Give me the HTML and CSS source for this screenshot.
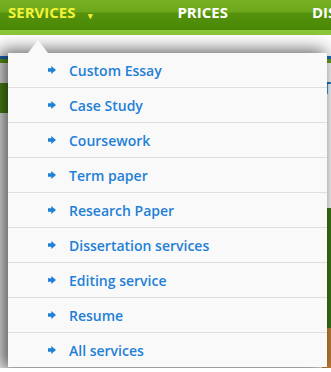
FILE: index.html
```html
<!DOCTYPE html>
<html lang="en">
<head>
    <meta charset="UTF-8">
    <meta name="viewport" content="width=device-width, initial-scale=1.0">
    <title>Services menu</title>
    <link rel="stylesheet" href="styles.css">
</head>
<body>
    <nav class="topnav">
        <ul class="nav-list">
            <li class="nav-item active">SERVICES <span class="caret">&#9662;</span>
                <!-- Dropdown menu -->
                <ul class="dropdown">
                    <li><a href="#"><svg class="arrow" viewBox="0 0 8 8"><path d="M0 2.3h3.3V0L8 4 3.3 8V5.7H0z"/></svg>Custom Essay</a></li>
                    <li><a href="#"><svg class="arrow" viewBox="0 0 8 8"><path d="M0 2.3h3.3V0L8 4 3.3 8V5.7H0z"/></svg>Case Study</a></li>
                    <li><a href="#"><svg class="arrow" viewBox="0 0 8 8"><path d="M0 2.3h3.3V0L8 4 3.3 8V5.7H0z"/></svg>Coursework</a></li>
                    <li><a href="#"><svg class="arrow" viewBox="0 0 8 8"><path d="M0 2.3h3.3V0L8 4 3.3 8V5.7H0z"/></svg>Term paper</a></li>
                    <li><a href="#"><svg class="arrow" viewBox="0 0 8 8"><path d="M0 2.3h3.3V0L8 4 3.3 8V5.7H0z"/></svg>Research Paper</a></li>
                    <li><a href="#"><svg class="arrow" viewBox="0 0 8 8"><path d="M0 2.3h3.3V0L8 4 3.3 8V5.7H0z"/></svg>Dissertation services</a></li>
                    <li><a href="#"><svg class="arrow" viewBox="0 0 8 8"><path d="M0 2.3h3.3V0L8 4 3.3 8V5.7H0z"/></svg>Editing service</a></li>
                    <li><a href="#"><svg class="arrow" viewBox="0 0 8 8"><path d="M0 2.3h3.3V0L8 4 3.3 8V5.7H0z"/></svg>Resume</a></li>
                    <li><a href="#"><svg class="arrow" viewBox="0 0 8 8"><path d="M0 2.3h3.3V0L8 4 3.3 8V5.7H0z"/></svg>All services</a></li>
                </ul>
            </li>
            <li class="nav-item">PRICES</li>
            <li class="nav-item">DIS</li>
        </ul>
    </nav>

    <div class="page">
        <div class="page-line"></div>
        <div class="page-body">
            <div class="sidebar">
                <div class="side-block"></div>
            </div>
            <div class="article">
                <h2>T</h2>
                <p>c</p>
                <p>v</p>
                <p>e</p>
                <div class="banner"><span class="badge"></span></div>
            </div>
        </div>
    </div>
</body>
</html>
```

FILE: styles.css
```css
body {
    font-family: 'Open Sans', 'Liberation Sans', sans-serif;
    margin: 0;
    padding: 0;
    background-color: #fff;
    overflow: hidden;
}
.topnav {
    height: 30px;
    background: linear-gradient(to bottom, #78b022 0, #6ca81b 12px, #55910c 13px, #4a8806 30px);
    border-bottom: 5px solid #8cc63c;
    position: relative;
    z-index: 10;
}
.nav-list {
    list-style: none;
    margin: 0;
    padding: 0 0 0 8px;
    display: flex;
    white-space: nowrap;
}
.nav-item {
    position: relative;
    font-size: 15px;
    font-weight: 700;
    line-height: 24px;
    color: #fff;
    margin-right: 84px;
}
.nav-item:last-child {
    margin-right: 0;
}
.nav-item.active {
    color: #f2f23a;
}
.caret {
    font-size: 9px;
    margin-left: 9px;
    vertical-align: -1px;
}
.dropdown {
    position: absolute;
    top: 53px;
    left: 0;
    width: 319px;
    margin: 0;
    padding: 0;
    list-style: none;
    background-color: #f9f9f9;
    box-shadow: -5px 0 16px 3px rgba(0, 0, 0, 0.62);
}
.dropdown::before {
    content: "";
    position: absolute;
    top: -13px;
    left: 20px;
    border-left: 10px solid transparent;
    border-right: 10px solid transparent;
    border-bottom: 13px solid #f9f9f9;
}
.dropdown li {
    border-bottom: 1px solid #dedede;
}
.dropdown li:last-child {
    border-bottom: none;
}
.dropdown a {
    display: flex;
    align-items: center;
    height: 34px;
    padding-top: 1px;
    box-sizing: border-box;
    padding-left: 40px;
    font-size: 14px;
    font-weight: 600;
    color: #1f80d6;
    text-decoration: none;
}
.arrow {
    width: 8px;
    height: 8px;
    margin-right: 13px;
    margin-top: -1px;
    fill: #1f80d6;
}
.page-line {
    margin-top: 21px;
    height: 3px;
    background-color: #1b6fc2;
    border-bottom: 4px solid #6aa51a;
}
.page-body {
    display: flex;
}
.sidebar {
    width: 120px;
    padding-top: 20px;
}
.side-block {
    height: 30px;
    background-color: #5a961a;
}
.article {
    flex: 1;
    padding-left: 208px;
}
.article h2 {
    margin: 18px 0 9px;
    font-size: 16px;
    line-height: 14px;
    color: #1b6fc2;
}
.article p {
    margin: 0;
    font-size: 9px;
    line-height: 8px;
    height: 8px;
    color: #444;
}
.banner {
    margin-top: 80px;
    height: 160px;
    background-color: #3d7a12;
    position: relative;
}
.badge {
    position: absolute;
    top: 120px;
    left: 0;
    width: 20px;
    height: 40px;
    background-color: #c9823a;
}
```
